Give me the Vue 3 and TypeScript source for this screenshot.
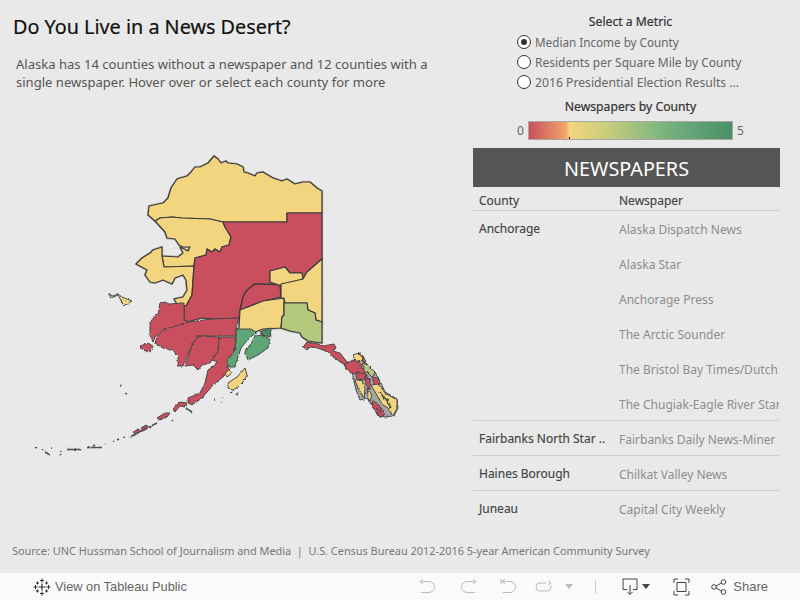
<script setup lang="ts">
const RED = '#c94f5f'
const YEL = '#f3d57f'
const LGR = '#b5c97d'
const GRN = '#5fa574'
const DGR = '#4a8f66'

type Region = { c: string; p: string }

const regions: Region[] = [
  // North Slope
  { c: YEL, p: '148,215 149,206 163,203 168,198 171,188 177,179 180,178 187,176 191,172 195,167 200,167 208,163 214,156 218,159 221,163 226,161 228,163 237,164 243,167 244,172 248,173 255,176 257,173 263,172 273,178 282,181 287,179 295,184 303,182 310,182 317,188 322,191 322,213 287,213 287,222 223,222 210,219 182,218 172,217 160,218 155,221' },
  // Northwest Arctic
  { c: YEL, p: '160,218 172,217 182,218 210,219 223,222 225,227 231,237 229,245 222,247 220,252 215,249 212,252 207,249 206,255 195,258 194,266 164,267 162,256 178,257 183,253 180,247 188,251 190,247 183,247 179,245 175,239 167,238 165,232 155,221' },
  // Nome
  { c: YEL, p: '136,264 142,258 150,253 153,250 162,247 162,256 164,267 194,266 193,280 192,295 186,306 177,304 174,299 183,297 187,290 186,280 183,275 175,278 172,284 163,280 155,283 150,282 145,275 147,270' },
  // Yukon-Koyukuk
  { c: RED, p: '223,222 287,222 287,213 322,213 322,259 307,272 303,279 302,273 290,273 285,267 270,271 270,282 280,284 255,284 247,290 243,297 240,310 239,318 212,319 202,318 187,322 184,319 184,306 186,306 192,295 193,280 194,266 195,258 206,255 207,249 212,252 215,249 220,252 222,247 229,245 231,237 225,227' },
  // Denali-ish red
  { c: RED, p: '240,310 243,297 247,290 255,284 280,285 281,297 263,301' },
  // Matanuska yellow
  { c: YEL, p: '240,310 263,301 284,298 284,315 282,317 281,328 263,329 255,332 236,329 239,328' },
  // Fairbanks yellow
  { c: YEL, p: '270,271 285,267 290,273 302,273 303,279 282,286 270,282' },
  // SE Fairbanks yellow
  { c: YEL, p: '281,284 303,279 307,272 322,259 322,322 316,320 315,313 308,310 307,303 285,303 284,298 281,298' },
  // Valdez
  { c: LGR, p: '284,303 307,303 308,310 315,313 316,320 322,322 322,343 308,341 302,337 300,333 290,331 281,328 282,317 284,315' },
]

const rough: Region[] = [
  // St Lawrence
  { c: YEL, p: '109,294 111,298 118,295 124,306 132,301 122,297 118,294 113,296' },
  // Bethel
  { c: RED, p: '160,303 165,302 169,304 184,303 184,319 189,322 163,330 155,337 153,342 150,335 150,322 158,313' },
  // Dillingham
  { c: RED, p: '189,322 212,319 239,318 236,328 236,336 198,336 193,343 183,366 178,366 178,357 173,350 163,348 155,343 157,337 163,330' },
  // Bristol
  { c: RED, p: '198,336 219,337 218,352 212,360 210,363 202,365 198,370 193,365 185,366 193,343' },
  // Lake and Peninsula
  { c: RED, p: '219,337 236,337 234,352 228,360 227,367 230,370 223,377 213,385 202,398 192,405 188,403 188,398 200,393 205,383 208,370 215,365 217,362 212,360 218,352' },
  // Nunivak
  { c: RED, p: '140,346 148,343 153,346 150,352 143,350' },
  // Anchorage / Kenai
  { c: GRN, p: '236,329 251,329 256,332 250,338 245,343 241,348 237,360 235,367 228,367 227,360 234,352 236,343' },
  { c: GRN, p: '255,336 262,335 270,339 268,348 258,355 248,360 245,352 252,342' },
  { c: DGR, p: '260,332 270,328 271,337 262,335' },
  // Kodiak
  { c: YEL, p: '228,383 237,377 245,368 247,375 243,382 238,387 233,390 228,388' },
  { c: YEL, p: '225,373 230,370 232,373 227,377' },
  // Aleutians
  { c: RED, p: '173,408 180,402 187,403 185,407 180,406 175,412' },
  { c: RED, p: '157,418 165,413 170,413 167,417 160,420' },
  { c: RED, p: '141,428 146,425 148,428 143,431' },
  { c: RED, p: '133,432 138,429 141,431 136,434' },
  // Panhandle underlay
  { c: '#a6a6a6', p: '352,372 365,362 375,372 381,383 385,392 397,399 398,408 394,416 385,417 378,416 372,405 367,398 360,400 356,390' },
  // Panhandle
  { c: RED, p: '303,347 307,342 318,344 323,346 334,344 336,348 333,351 340,353 347,362 345,365 333,357 330,353 318,348 310,347 307,350' },
  { c: RED, p: '344,365 353,360 360,363 362,368 368,377 357,375 348,371' },
  { c: RED, p: '358,352 363,356 366,362 362,362' },
  { c: YEL, p: '353,355 358,353 363,358 362,362 355,361' },
  { c: LGR, p: '362,363 368,365 375,373 372,377 365,370' },
  { c: RED, p: '372,377 377,378 381,383 375,387' },
  { c: RED, p: '356,372 366,374 364,380 357,379' },
  { c: YEL, p: '355,380 362,380 365,390 364,398 358,388' },
  { c: RED, p: '365,375 370,380 370,390 366,385' },
  { c: YEL, p: '371,385 378,384 385,393 397,400 397,408 393,416 388,408 383,405 378,397' },
  { c: RED, p: '372,400 379,405 385,415 380,417 373,408' },
  { c: YEL, p: '367,388 372,396 369,402' },
]

const specks: string[] = [
  'M87 447.500h15', 'M93 446l2 -1', 'M67 449.500h14', 'M120 386l2 -1', 'M125 393l2 1',
  'M35 448l2 -1', 'M51 448l1 0', 'M45 452l5 3', 'M42 449l1 1', 'M105 444l1 -1',
  'M113 442l1 -1', 'M117 440l2 -1', 'M123 438l2 -1', 'M61 450l0 2', 'M60 455l1 -1',
  'M130 437l27 -14', 'M221 403l1 0', 'M214 400l1 0', 'M172 420l1 1', 'M190 412l3 1',
  'M186 408l6 4', 'M236 395l2 -2', 'M222 398l1 0', 'M231 392l1 1',
  'M380 392l4 6 5 2', 'M386 399l5 9', 'M376 408l5 4',
]

const rows: { county: string; papers: string[] }[] = [
  {
    county: 'Anchorage',
    papers: [
      'Alaska Dispatch News',
      'Alaska Star',
      'Anchorage Press',
      'The Arctic Sounder',
      'The Bristol Bay Times/Dutch',
      'The Chugiak-Eagle River Star',
    ],
  },
  { county: 'Fairbanks North Star ..', papers: ['Fairbanks Daily News-Miner'] },
  { county: 'Haines Borough', papers: ['Chilkat Valley News'] },
  { county: 'Juneau', papers: ['Capital City Weekly'] },
]
const metrics = [
  'Median Income by County',
  'Residents per Square Mile by County',
  '2016 Presidential Election Results ...',
]
</script>

<template>
  <div class="page">
    <div class="dash">
      <div class="top">
        <section class="left">
          <h1>Do You Live in a News Desert?</h1>
          <p class="intro">Alaska has 14 counties without a newspaper and 12 counties with a<br />single newspaper. Hover over or select each county for more</p>
          <div class="mapbox">
            <svg class="map" viewBox="12 99 453 431" width="453" height="431">
              <defs>
                <filter id="coast" filterUnits="userSpaceOnUse" x="12" y="99" width="453" height="431">
                  <feTurbulence type="fractalNoise" baseFrequency="0.4" numOctaves="2" seed="4" result="n" />
                  <feDisplacementMap in="SourceGraphic" in2="n" scale="2.600" xChannelSelector="R" yChannelSelector="G" />
                </filter>
              </defs>
              <g fill="none" stroke="#8f8f8f" stroke-width="2.400" stroke-linejoin="round" opacity="0.6">
                <polygon v-for="(r, i) in regions" :key="'s' + i" :points="r.p" />
              </g>
              <polygon v-for="(r, i) in regions" :key="i" :points="r.p" :fill="r.c" stroke="#3a3a3a" stroke-width="1.200" stroke-linejoin="round" />
              <g filter="url(#coast)">
                <polygon v-for="(r, i) in rough" :key="'r' + i" :points="r.p" :fill="r.c" stroke="#484848" stroke-width="1" stroke-linejoin="round" />
                <path v-for="(d, i) in specks" :key="'k' + i" :d="d" stroke="#4f4f4f" stroke-width="1.600" fill="none" />
              </g>
            </svg>
          </div>
        </section>
        <section class="right">
          <div class="ftitle">Select a Metric</div>
          <div class="radios">
            <div v-for="(m, i) in metrics" :key="m" class="radio" :class="'r' + i">
              <span class="dot" :class="{ on: i === 0 }"></span>
              <span>{{ m }}</span>
            </div>
          </div>
          <div class="ltitle">Newspapers by County</div>
          <div class="legend">
            <span class="lnum">0</span>
            <div class="ramp"><i class="tick"></i></div>
            <span class="lnum">5</span>
          </div>
          <div class="band">NEWSPAPERS</div>
          <div class="thead">
            <span class="c1">County</span>
            <span class="c2">Newspaper</span>
          </div>
          <div v-for="r in rows" :key="r.county" class="row">
            <div class="c1 county">{{ r.county }}</div>
            <div class="c2">
              <div v-for="n in r.papers" :key="n" class="paper">{{ n }}</div>
            </div>
          </div>
        </section>
      </div>
      <div class="source">Source: UNC Hussman School of Journalism and Media &nbsp;|&nbsp; U.S. Census Bureau 2012-2016 5-year American Community Survey</div>
    </div>
    <footer class="bar">
      <svg class="logo" width="18" height="18" viewBox="0 0 18 18" fill="none" stroke="#333" stroke-width="1">
        <path d="M9 5.500v7M5.500 9h7" stroke-width="1.200" />
        <path d="M9 .5v4M7 2.500h4M9 13.500v4M7 15.500h4M.5 9h4M2.500 7v4M13.500 9h4M15.500 7v4" />
        <path d="M4.500 3.500v3M3 5h3M13.500 3.500v3M12 5h3M4.500 11.500v3M3 13h3M13.500 11.500v3M12 13h3" />
      </svg>
      <span class="view">View on Tableau Public</span>
      <span class="spacer"></span>
      <svg class="ic off" width="17" height="18" viewBox="0 0 17 18"><path d="M1 3.500h9a5.500 5.500 0 0 1 0 11H2M4 1l-3 2.500 3 2.500" /></svg>
      <svg class="ic off m24" width="17" height="18" viewBox="0 0 17 18"><path d="M16 3.500H7a5.500 5.500 0 0 0 0 11h8M13 1l3 2.500-3 2.500" /></svg>
      <svg class="ic off m23" width="17" height="18" viewBox="0 0 17 18"><path d="M1 1v5M1 3.500h9a5.500 5.500 0 0 1 0 11H3M5 1L2 3.500 5 6" /></svg>
      <svg class="ic off m18" width="17" height="18" viewBox="0 0 17 18"><path d="M11 5H5a4 4 0 0 0 0 8h7a4 4 0 0 0 4 -4V7M13 3l3 2-3 2" /></svg>
      <span class="caret off m13"></span>
      <span class="sep"></span>
      <svg class="ic dark m26" width="16" height="18" viewBox="0 0 16 18"><path d="M5 11.500H1V1h14v10.500h-4M8 7v9.500M5.500 14L8 16.500 10.500 14" /></svg>
      <span class="caret m4"></span>
      <svg class="ic dark m23" width="17" height="18" viewBox="0 0 17 18"><path d="M1 5V1h4M12 1h4v4M16 13v4h-4M5 17H1v-4M4 4.500h9v9H4z" /></svg>
      <svg class="ic dark m21" width="16" height="18" viewBox="0 0 16 18"><circle cx="3" cy="9" r="2.300" /><circle cx="12.500" cy="4" r="2.300" /><circle cx="12.500" cy="14" r="2.300" /><path d="M5 8l5.500 -3M5 10l5.500 3" /></svg>
      <span class="share">Share</span>
    </footer>
  </div>
</template>

<style>
html, body { margin: 0; padding: 0; background: #e9e9e9; }
</style>

<style scoped>
.page {
  width: 800px;
  height: 600px;
  display: flex;
  flex-direction: column;
  background: #e9e9e9;
  font-family: "Noto Sans", "Open Sans", sans-serif;
  overflow: hidden;
}
.dash { height: 573px; display: flex; flex-direction: column; }
.top { display: flex; height: 530px; }
.left { width: 465px; padding-left: 12px; box-sizing: border-box; }
h1 {
  margin: 15px 0 16px 1px;
  font-size: 19.800px;
  line-height: 24px;
  font-weight: 400;
  -webkit-text-stroke: 0.2px #111;
  color: #111;
}
.intro {
  margin: 0 0 8px 4px;
  font-size: 13.050px;
  line-height: 18px;
  color: #555;
}
.mapbox { width: 453px; height: 431px; outline: 1px solid #ececec; outline-offset: -1px; }
.map { display: block; }
.right { width: 307px; margin-left: 8px; }
.ftitle, .ltitle {
  text-align: center;
  font-size: 12.200px;
  line-height: 16px;
  font-weight: 400;
  -webkit-text-stroke: 0.2px #333;
  color: #333;
  padding-left: 10px;
  padding-right: 2px;
}
.ftitle { padding-top: 14px; }
.radios { margin-top: 2px; padding-left: 44px; }
.radio {
  height: 20px;
  display: flex;
  align-items: center;
  gap: 4px;
  font-size: 12px;
  color: #666;
  white-space: nowrap;
}
.r0 { font-size: 11.700px; }
.r2 { font-size: 12.200px; }
.dot {
  width: 12px;
  height: 12px;
  border: 1px solid #333;
  border-radius: 50%;
  background: #fff;
  display: flex;
  align-items: center;
  justify-content: center;
  flex: none;
}
.dot.on::after {
  content: "";
  width: 6px;
  height: 6px;
  border-radius: 50%;
  background: #333;
}
.ltitle { margin-top: 7px; }
.legend {
  margin-top: 6px;
  height: 19px;
  display: flex;
  align-items: center;
  padding-left: 44px;
}
.lnum { width: 11px; font-size: 12px; color: #666; }
.ramp {
  position: relative;
  width: 205px;
  height: 19px;
  box-sizing: border-box;
  border: 1px solid #a9a9a0;
  margin-right: 4px;
  background: linear-gradient(90deg, #c94f5f 0%, #f2a36b 18%, #f3d57f 20%, #c4cc7d 40%, #8bba80 60%, #6aaa7c 75%, #4a8f66 100%);
}
.tick { position: absolute; left: 40px; bottom: 0; width: 1px; height: 2px; background: #111; }
.band {
  margin-top: 8px;
  height: 39px;
  line-height: 41px;
  background: #555;
  color: #fff;
  text-align: center;
  font-size: 19.800px;
}
.thead, .row {
  display: flex;
  width: 306px;
  border-bottom: 1px solid #cbcbcb;
  font-size: 12px;
}
.thead { height: 23px; line-height: 27px; color: #444; -webkit-text-stroke: 0.15px #444; }
.row:last-child { border-bottom: 0; }
.c1 { width: 146px; padding-left: 6px; box-sizing: border-box; flex: none; white-space: nowrap; overflow: hidden; }
.c2 { width: 160px; flex: none; overflow: hidden; white-space: nowrap; }
.county { height: 34px; line-height: 36px; color: #444; -webkit-text-stroke: 0.15px #444; }
.paper { height: 35px; line-height: 37px; color: #8d8d8d; }
.row .paper:last-child { height: 34px; line-height: 37px; }
.source {
  padding: 13px 0 0 12px;
  line-height: 16px;
  font-size: 10.900px;
  color: #777;
  white-space: nowrap;
}
.bar {
  height: 27px;
  background: #fafafa;
  display: flex;
  align-items: center;
  padding-left: 33px;
  font-family: "Liberation Sans", sans-serif;
  font-size: 12.800px;
  color: #666;
}
.logo { flex: none; }
.view { margin-left: 4px; }
.spacer { flex: 1; }
.ic { flex: none; fill: none; stroke-width: 1; }
.ic.off { stroke: #bbb; }
.ic.dark { stroke: #444; }
.m24 { margin-left: 24px; }
.m23 { margin-left: 23px; }
.m18 { margin-left: 18px; }
.m13 { margin-left: 13px; }
.m26 { margin-left: 26px; }
.m21 { margin-left: 21px; }
.m4 { margin-left: 4px; }
.caret {
  width: 0;
  height: 0;
  border-left: 4px solid transparent;
  border-right: 4px solid transparent;
  border-top: 5px solid #444;
}
.caret.off { border-top-color: #bbb; }
.sep { width: 1px; height: 14px; background: #ccc; margin-left: 22px; }
.share { margin: 0 32px 0 6px; font-size: 13px; }
</style>
